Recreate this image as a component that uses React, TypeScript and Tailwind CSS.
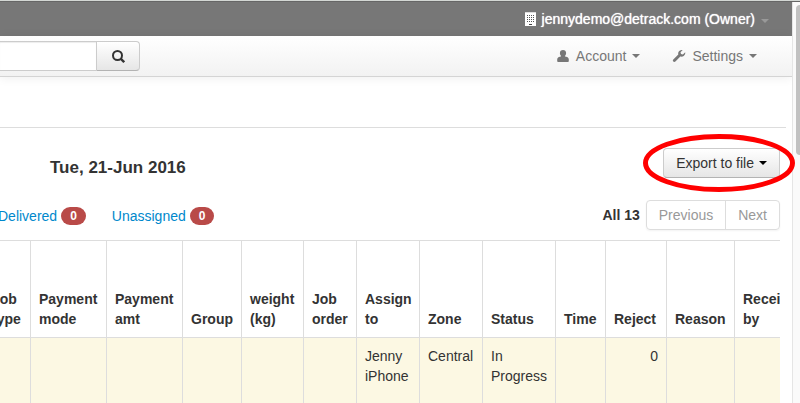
import { useState } from "react"

const columns = [
  { label: "Job type", width: "w-[47px]" },
  { label: "Payment mode", width: "w-[76px]" },
  { label: "Payment amt", width: "w-[76px]" },
  { label: "Group", width: "w-[59px]" },
  { label: "weight (kg)", width: "w-[62px]" },
  { label: "Job order", width: "w-[53px]" },
  { label: "Assign to", width: "w-[63px]" },
  { label: "Zone", width: "w-[63px]" },
  { label: "Status", width: "w-[73px]" },
  { label: "Time", width: "w-[50px]" },
  { label: "Reject", width: "w-[61px]" },
  { label: "Reason", width: "w-[68px]" },
  { label: "Received by", width: "w-[84px]" },
]

const rows = [["", "", "", "", "", "", "Jenny iPhone", "Central", "In Progress", "", "0", "", ""]]

const tabs = [
  { label: "Delivered", count: 0 },
  { label: "Unassigned", count: 0 },
]

function Caret({ className = "" }: { className?: string }) {
  return (
    <svg width="8" height="4" viewBox="0 0 8 4" fill="currentColor" className={className} aria-hidden="true">
      <path d="M0 0h8L4 4z" />
    </svg>
  )
}

function SearchIcon() {
  return (
    <svg width="14" height="14" viewBox="0 0 14 14" fill="none" stroke="#333" aria-hidden="true">
      <circle cx="6.5" cy="6.5" r="4.500" strokeWidth="2" />
      <path d="M9.600 9.600 13.200 13.200" strokeWidth="2.300" />
    </svg>
  )
}

function UserIcon() {
  return (
    <svg width="14" height="14" viewBox="0 0 14 14" fill="currentColor" aria-hidden="true">
      <path d="M7 1C5.100 1 3.900 2.200 3.900 4.100c0 1.300.5 2.300 1.300 2.900-.2.400-.6.600-1.200.7C2.200 8 1.200 9 1.200 10.500v1.700c0 .5.4.8.9.8h9.800c.5 0 .9-.3.9-.8v-1.700c0-1.500-1-2.500-2.800-2.800-.6-.1-1-.3-1.200-.7.800-.6 1.300-1.600 1.300-2.900C10.100 2.200 8.900 1 7 1z" />
    </svg>
  )
}

function WrenchIcon() {
  return (
    <svg width="14" height="14" viewBox="0 0 14 14" fill="currentColor" aria-hidden="true">
      <path d="M10.700 1.100C8.800.6 6.900 1.600 6.300 3.400c-.2.700-.2 1.400 0 2.100L1.300 10.500c-.6.600-.6 1.500 0 2.100s1.500.6 2.100 0l5-5c2 .6 4.100-.5 4.700-2.500.2-.6.2-1.200.1-1.800L10.900 5.400 9 4.900 8.500 3.200z" />
    </svg>
  )
}

function BuildingIcon() {
  return (
    <svg width="12" height="14" viewBox="0 0 12 14" aria-hidden="true">
      <path d="M0 0h11v14H0z" fill="#fff" />
      <path d="M0 0h11v1H0z" fill="#ddd" />
      <path d="M2 3.500h7M2 5.500h7M2 7.500h7M2 9.500h7" stroke="#555" strokeDasharray="1 1" />
      <path d="M4 12h3v1H4z" fill="#444" />
    </svg>
  )
}

export default function App() {
  const [query, setQuery] = useState("")

  return (
    <div className="flex h-screen flex-col overflow-hidden bg-white font-['Liberation_Sans',Arial,sans-serif] text-sm text-[#333]">
      <div className="h-0.5 shrink-0 border-b border-[#666] bg-[#d3d7d4]" />
      <div className="flex min-h-0 flex-1">
        <div className="min-w-0 flex-1">
          <header>
            <div className="flex h-[34px] items-center justify-end bg-[#777] pr-[23px]">
              <button className="flex items-center text-white [text-shadow:0_0_1px_#fff]">
                <BuildingIcon />
                <span className="mr-1.5 ml-[5px]">jennydemo@detrack.com (Owner)</span>
                <Caret className="mt-1 text-[#999]" />
              </button>
            </div>
            <div className="flex h-[41px] items-center justify-between border-b border-[#d4d4d4] bg-linear-to-b from-white to-[#f2f2f2] pr-[35px] shadow-[0_1px_10px_rgba(0,0,0,0.07)]">
              <form className="flex" onSubmit={(e) => e.preventDefault()}>
                <input
                  type="text"
                  aria-label="Search"
                  value={query}
                  onChange={(e) => setQuery(e.target.value)}
                  className="h-[30px] w-24 border-y border-[#ccc] bg-white px-2 shadow-[inset_0_1px_1px_rgba(0,0,0,0.075)] outline-none"
                />
                <button
                  type="submit"
                  aria-label="Search"
                  className="flex h-[30px] w-11 items-center justify-center rounded-r border border-[#ccc] border-b-[#b3b3b3] bg-linear-to-b from-white to-[#e6e6e6]"
                >
                  <SearchIcon />
                </button>
              </form>
              <nav className="flex gap-8 text-[#777]">
                <button className="flex items-center">
                  <UserIcon />
                  <span className="mx-1.5">Account</span>
                  <Caret />
                </button>
                <button className="flex items-center">
                  <WrenchIcon />
                  <span className="mx-1.5">Settings</span>
                  <Caret />
                </button>
              </nav>
            </div>
          </header>

          <main className="pt-[50px] pr-1.5">
            <hr className="border-[#ddd]" />
            <div className="pr-1.5">
              <div className="mt-5 flex items-center justify-between">
                <h1 className="ml-[50px] pt-2.5 text-[17px] leading-5 font-bold">Tue, 21-Jun 2016</h1>
                <div className="relative">
                  <button className="flex h-[30px] items-center rounded border border-[#ccc] border-b-[#b3b3b3] bg-linear-to-b from-white to-[#e6e6e6] px-3">
                    Export to file
                    <Caret className="ml-[5px] text-black" />
                  </button>
                  {/* highlight ring around the export button */}
                  <svg
                    className="pointer-events-none absolute -top-3.5 -left-5 z-10"
                    width="152"
                    height="58"
                    viewBox="0 0 152 58"
                    fill="none"
                    aria-hidden="true"
                  >
                    <ellipse cx="76" cy="29" rx="73.5" ry="26.5" stroke="#f00" strokeWidth="5" />
                  </svg>
                </div>
              </div>

              <div className="mt-[22px] flex h-[30px] items-center justify-between">
                <nav className="-ml-0.5 flex gap-[26px] pt-0.5">
                  {tabs.map((tab) => (
                    <a key={tab.label} href="#" className="flex items-center gap-1 text-[#08c]">
                      {tab.label}
                      <span className="rounded-full bg-[#b94a48] px-[9px] text-xs leading-[18px] font-bold text-white">
                        {tab.count}
                      </span>
                    </a>
                  ))}
                </nav>
                <div className="flex items-center gap-1.5">
                  <span className="font-bold">All 13</span>
                  <div className="flex rounded border border-[#ddd] leading-7 text-[#999] shadow-[0_1px_2px_rgba(0,0,0,0.05)]">
                    <button className="border-r border-[#ddd] px-3">Previous</button>
                    <button className="px-3">Next</button>
                  </div>
                </div>
              </div>

              {/* wide table, the outer columns run past both edges */}
              <div className="mt-2.5 overflow-hidden">
                <table className="-ml-[17px] w-[835px] table-fixed border-separate border-spacing-0 border-t border-[#ddd] leading-5">
                  <thead>
                    <tr className="h-24 align-bottom">
                      {columns.map((col) => (
                        <th key={col.label} className={`border-l border-[#ddd] p-2 text-left font-bold ${col.width}`}>
                          {col.label}
                        </th>
                      ))}
                    </tr>
                  </thead>
                  <tbody>
                    {rows.map((row, index) => (
                      <tr key={index} className="h-20 bg-[#fcf8e3] align-top">
                        {row.map((cell, i) => (
                          <td
                            key={i}
                            className={`border-t border-l border-[#ddd] p-2 ${columns[i].label === "Reject" ? "text-right" : ""}`}
                          >
                            {cell}
                          </td>
                        ))}
                      </tr>
                    ))}
                  </tbody>
                </table>
              </div>
            </div>
          </main>
        </div>

        <div className="w-2 shrink-0 border-l border-[#e5e5e5] bg-[#fafafa] pt-[3px] pl-[3px]">
          <div className="h-[150px] rounded-l bg-[#c1c1c1]" />
        </div>
      </div>
    </div>
  )
}
